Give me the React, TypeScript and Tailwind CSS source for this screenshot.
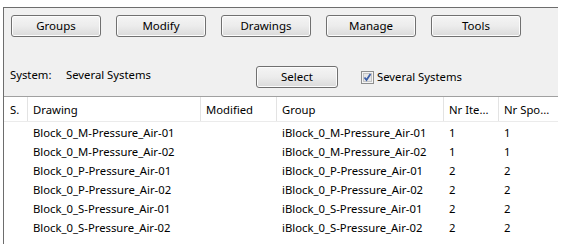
import React from 'react'

const font = { fontFamily: '"Noto Sans", "DejaVu Sans", sans-serif' }

const buttons = ['Groups', 'Modify', 'Drawings', 'Manage', 'Tools']

const rows = [
  ['Block_0_M-Pressure_Air-01', 'iBlock_0_M-Pressure_Air-01', '1', '1'],
  ['Block_0_M-Pressure_Air-02', 'iBlock_0_M-Pressure_Air-02', '1', '1'],
  ['Block_0_P-Pressure_Air-01', 'iBlock_0_P-Pressure_Air-01', '2', '2'],
  ['Block_0_P-Pressure_Air-02', 'iBlock_0_P-Pressure_Air-02', '2', '2'],
  ['Block_0_S-Pressure_Air-01', 'iBlock_0_S-Pressure_Air-01', '2', '2'],
  ['Block_0_S-Pressure_Air-02', 'iBlock_0_S-Pressure_Air-02', '2', '2'],
]

function WinButton({ label, className }: { label: string; className: string }) {
  return (
    <button
      className={`flex items-center justify-center rounded-[3px] border border-[#707070] bg-gradient-to-b from-[#f4f4f4] via-[#ececec] to-[#dadada] text-[11.5px] text-black shadow-[inset_0_0_0_1px_#fcfcfc] ${className}`}
    >
      {label}
    </button>
  )
}

function Check() {
  return (
    <svg width="13" height="13" viewBox="0 0 13 13">
      <rect x="0.5" y="0.5" width="12" height="12" fill="#f4f4f4" stroke="#8e8f8f" />
      <rect x="2.5" y="2.5" width="8" height="8" fill="#e6e6e6" stroke="#c4c4c4" />
      <path d="M3.5 6.5 L5.5 9 L9.5 3" fill="none" stroke="#3c5fa8" strokeWidth="1.8" />
    </svg>
  )
}

const cols = ['w-[23px]', 'w-[173px]', 'w-[76px]', 'w-[167px]', 'w-[55px]', 'w-[60px]']

export default function App() {
  return (
    <div className="w-[565px] h-[244px] bg-white pt-[7px] pl-[3px] overflow-hidden text-[11.3px] text-black" style={font}>
      <div className="w-[555px] h-[237px] border-l border-t border-[#6d6d6d] flex flex-col">
        <div className="h-[89px] bg-[#f0f0f0] border-b border-[#a0a0a0] pt-[7px] pl-[7px]">
          <div className="flex gap-[15px]">
            {buttons.map((b) => (
              <WinButton key={b} label={b} className="w-[90px] h-[22px]" />
            ))}
          </div>
          <div className="flex items-center mt-[29px] h-[22px]">
            <span className="ml-[-1px] w-[56px] mb-[3px]">System:</span>
            <span className="w-[190px] mb-[3px]">Several Systems</span>
            <WinButton label="Select" className="w-[82px] h-[22px]" />
            <span className="ml-[23px] flex items-center gap-[3px]">
              <Check />
              Several Systems
            </span>
          </div>
        </div>
        <div className="flex-1 bg-white">
          <div className="flex h-[25px] items-center border-b border-[#ebebeb]">
            {['S.', 'Drawing', 'Modified', 'Group', 'Nr Ite...', 'Nr Spo...'].map((h, i) => (
              <div
                key={h}
                className={`${cols[i]} h-full flex items-center pt-[3px] pl-[5px] whitespace-nowrap ${i > 0 ? 'border-l border-[#e3e3e3]' : 'pl-[6px]'}`}
              >
                {h}
              </div>
            ))}
          </div>
          <div className="pt-[2px]">
            {rows.map((r) => (
              <div key={r[0]} className="flex h-[19px] items-center">
                <div className={cols[0]} />
                <div className={`${cols[1]} pl-[6px]`}>{r[0]}</div>
                <div className={cols[2]} />
                <div className={`${cols[3]} pl-[6px]`}>{r[1]}</div>
                <div className={`${cols[4]} pl-[6px]`}>{r[2]}</div>
                <div className={`${cols[5]} pl-[6px]`}>{r[3]}</div>
              </div>
            ))}
          </div>
        </div>
      </div>
    </div>
  )
}
